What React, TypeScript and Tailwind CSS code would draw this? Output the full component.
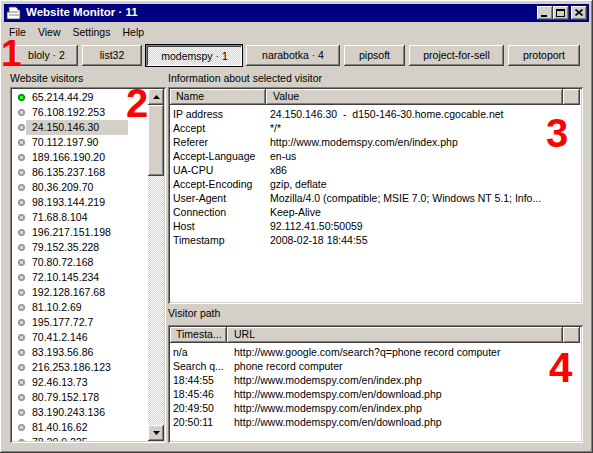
import React from 'react';

const raised =
  'shadow-[inset_-1px_-1px_#404040,inset_1px_1px_#ffffff,inset_-2px_-2px_#808080,inset_2px_2px_#d4d0c8]';
const sunken =
  'shadow-[inset_1px_1px_#808080,inset_-1px_-1px_#ffffff,inset_2px_2px_#404040,inset_-2px_-2px_#d4d0c8]';
const dither = 'bg-[repeating-conic-gradient(#ffffff_0_25%,#d4d0c8_0_50%)] bg-[length:2px_2px]';

const visitors = [
  '65.214.44.29',
  '76.108.192.253',
  '24.150.146.30',
  '70.112.197.90',
  '189.166.190.20',
  '86.135.237.168',
  '80.36.209.70',
  '98.193.144.219',
  '71.68.8.104',
  '196.217.151.198',
  '79.152.35.228',
  '70.80.72.168',
  '72.10.145.234',
  '192.128.167.68',
  '81.10.2.69',
  '195.177.72.7',
  '70.41.2.146',
  '83.193.56.86',
  '216.253.186.123',
  '92.46.13.73',
  '80.79.152.178',
  '83.190.243.136',
  '81.40.16.62',
  '78.29.9.225',
];

const info: [string, string][] = [
  ['IP address', '24.150.146.30  -  d150-146-30.home.cgocable.net'],
  ['Accept', '*/*'],
  ['Referer', 'http://www.modemspy.com/en/index.php'],
  ['Accept-Language', 'en-us'],
  ['UA-CPU', 'x86'],
  ['Accept-Encoding', 'gzip, deflate'],
  ['User-Agent', 'Mozilla/4.0 (compatible; MSIE 7.0; Windows NT 5.1; Info...'],
  ['Connection', 'Keep-Alive'],
  ['Host', '92.112.41.50:50059'],
  ['Timestamp', '2008-02-18 18:44:55'],
];

const path: [string, string][] = [
  ['n/a', 'http://www.google.com/search?q=phone record computer'],
  ['Search q...', 'phone record computer'],
  ['18:44:55', 'http://www.modemspy.com/en/index.php'],
  ['18:45:46', 'http://www.modemspy.com/en/download.php'],
  ['20:49:50', 'http://www.modemspy.com/en/index.php'],
  ['20:50:11', 'http://www.modemspy.com/en/download.php'],
];

// site buttons, widths written out so tailwind picks them up
const sites = [
  { label: 'bloly · 2', cls: 'w-[63px]' },
  { label: 'list32', cls: 'w-[60px]' },
  { label: 'modemspy · 1', cls: 'w-[96px]', active: true },
  { label: 'narabotka · 4', cls: 'w-[94px]' },
  { label: 'pipsoft', cls: 'w-[61px]' },
  { label: 'project-for-sell', cls: 'w-[95px]' },
  { label: 'protoport', cls: 'w-[72px]' },
];

const Dot = ({ on }: { on?: boolean }) => (
  <svg width="7" height="7" viewBox="0 0 7 7" className="shrink-0">
    <path d="M2 0h3l2 2v3l-2 2h-3l-2-2v-3z" fill={on ? '#009a00' : '#9c9c9c'} />
    <rect x="2" y="2" width="3" height="3" fill={on ? '#3cf03c' : '#d6d6d6'} />
  </svg>
);

const HeaderCell = ({ children, cls }: { children?: React.ReactNode; cls: string }) => (
  <div className={`h-[16px] bg-[#d4d0c8] leading-[15px] whitespace-nowrap overflow-hidden ${raised} ${cls}`}>
    {children}
  </div>
);

const Annot = ({ n, cls }: { n: string; cls: string }) => (
  <div className={`absolute font-bold leading-none text-[#ff0000] ${cls}`}>{n}</div>
);

export default function App() {
  return (
    <div
      className={`relative w-[593px] h-[453px] bg-[#d4d0c8] p-[4px] flex flex-col overflow-hidden font-['Liberation_Sans',Arial,sans-serif] text-[10.5px] text-black ${raised}`}
    >
      {/* title bar */}
      <div className="h-[18px] bg-[#000080] flex items-center pl-[2px] pr-[2px]">
        <svg width="16" height="14" viewBox="0 0 16 14" className="shrink-0">
          <path d="M3 1h7l2 2v1h2v9h-13v-7h2z" fill="#ffffff" stroke="#404040" strokeWidth="0.8" />
          <path d="M3 6h9M3 9h10" stroke="#808080" strokeWidth="1" />
        </svg>
        <span className="ml-[4px] text-white font-bold text-[11.5px] leading-none whitespace-nowrap">
          Website Monitor · 11
        </span>
        <div className="ml-auto flex items-center">
          <div className={`w-[16px] h-[14px] bg-[#d4d0c8] flex items-end justify-center pb-[3px] ${raised}`}>
            <div className="w-[6px] h-[2px] bg-black ml-[-2px]" />
          </div>
          <div className={`w-[16px] h-[14px] bg-[#d4d0c8] flex items-center justify-center ${raised}`}>
            <div className="w-[9px] h-[8px] border border-black border-t-2 mt-[-1px] ml-[-1px]" />
          </div>
          <div className={`ml-[2px] w-[16px] h-[14px] bg-[#d4d0c8] flex items-center justify-center ${raised}`}>
            <svg width="8" height="7" viewBox="0 0 8 7" className="mt-[-1px] ml-[-1px]">
              <path d="M0.5 0.5l7 6M7.5 0.5l-7 6" stroke="#000" strokeWidth="1.6" />
            </svg>
          </div>
        </div>
      </div>

      {/* menu */}
      <div className="h-[20px] flex items-center ml-[-1px]">
        {['File', 'View', 'Settings', 'Help'].map((m) => (
          <span key={m} className="px-[6px] leading-[14px]">
            {m}
          </span>
        ))}
      </div>

      {/* site buttons */}
      <div className="mt-[3px] h-[21px] flex gap-[4px] pl-[11px]">
        {sites.map((s) =>
          s.active ? (
            <div
              key={s.label}
              className={`${s.cls} h-[21px] flex items-center justify-center pt-[2px] pl-[1px] whitespace-nowrap outline outline-1 outline-black ${dither} shadow-[inset_1px_1px_#808080,inset_-1px_-1px_#ffffff,inset_2px_2px_#404040]`}
            >
              {s.label}
            </div>
          ) : (
            <div
              key={s.label}
              className={`${s.cls} h-[21px] flex items-center justify-center bg-[#d4d0c8] whitespace-nowrap ${raised}`}
            >
              {s.label}
            </div>
          )
        )}
      </div>

      {/* panels */}
      <div className="flex ml-[6px] gap-[2px]">
        {/* left: visitors */}
        <div className="w-[156px] flex flex-col">
          <div className="h-[21px] pt-[6px] leading-[13px]">Website visitors</div>
          <div className={`h-[356px] bg-white p-[2px] flex ${sunken}`}>
            <div className="flex-1 pt-[1px] overflow-hidden">
              {visitors.map((ip, i) => (
                <div key={ip} className="h-[15px] flex items-center pl-[6px]">
                  <Dot on={i === 0} />
                  <span
                    className={`ml-[1px] w-[102px] pl-[6px] leading-[15px] whitespace-nowrap ${
                      i === 2 ? 'bg-[#d4d0c8]' : ''
                    }`}
                  >
                    {ip}
                  </span>
                </div>
              ))}
            </div>
            <div className={`w-[16px] flex flex-col ${dither}`}>
              <div className={`h-[16px] bg-[#d4d0c8] flex items-center justify-center ${raised}`}>
                <svg width="7" height="4" viewBox="0 0 7 4">
                  <path d="M3.5 0l3.5 4h-7z" fill="#000" />
                </svg>
              </div>
              <div className={`h-[71px] bg-[#d4d0c8] ${raised}`} />
              <div className={`mt-auto h-[16px] bg-[#d4d0c8] flex items-center justify-center ${raised}`}>
                <svg width="7" height="4" viewBox="0 0 7 4">
                  <path d="M0 0h7l-3.5 4z" fill="#000" />
                </svg>
              </div>
            </div>
          </div>
        </div>

        {/* right: info + path */}
        <div className="w-[415px] flex flex-col">
          <div className="h-[21px] pt-[6px] leading-[13px]">Information about selected visitor</div>
          <div className={`h-[217px] bg-white p-[2px] ${sunken}`}>
            <div className="flex">
              <HeaderCell cls="w-[96px] pl-[6px]">Name</HeaderCell>
              <HeaderCell cls="w-[297px] pl-[7px]">Value</HeaderCell>
              <HeaderCell cls="w-[17px]" />
            </div>
            <div className="pt-[2px]">
              {info.map(([k, v]) => (
                <div key={k} className="h-[14px] flex leading-[14px] whitespace-pre">
                  <div className="w-[96px] pl-[3px] overflow-hidden">{k}</div>
                  <div className="w-[290px] pl-[4px] overflow-hidden">{v}</div>
                </div>
              ))}
            </div>
          </div>

          <div className="h-[21px] pt-[3px] leading-[13px]">Visitor path</div>
          <div className={`h-[118px] bg-white p-[2px] ${sunken}`}>
            <div className="flex">
              <HeaderCell cls="w-[57px] pl-[6px]">Timesta...</HeaderCell>
              <HeaderCell cls="w-[336px] pl-[7px]">URL</HeaderCell>
              <HeaderCell cls="w-[17px]" />
            </div>
            <div className="pt-[2px]">
              {path.map(([t, u], i) => (
                <div key={i} className="h-[14px] flex leading-[14px] whitespace-nowrap">
                  <div className="w-[57px] pl-[3px] overflow-hidden">{t}</div>
                  <div className="pl-[7px]">{u}</div>
                </div>
              ))}
            </div>
          </div>
        </div>
      </div>

      {/* red annotation numbers */}
      <Annot n="1" cls="left-[1px] top-[35px] text-[37px]" />
      <Annot n="2" cls="left-[126px] top-[83px] text-[40px]" />
      <Annot n="3" cls="left-[546px] top-[113px] text-[40px]" />
      <Annot n="4" cls="left-[549px] top-[347px] text-[42px]" />
    </div>
  );
}
